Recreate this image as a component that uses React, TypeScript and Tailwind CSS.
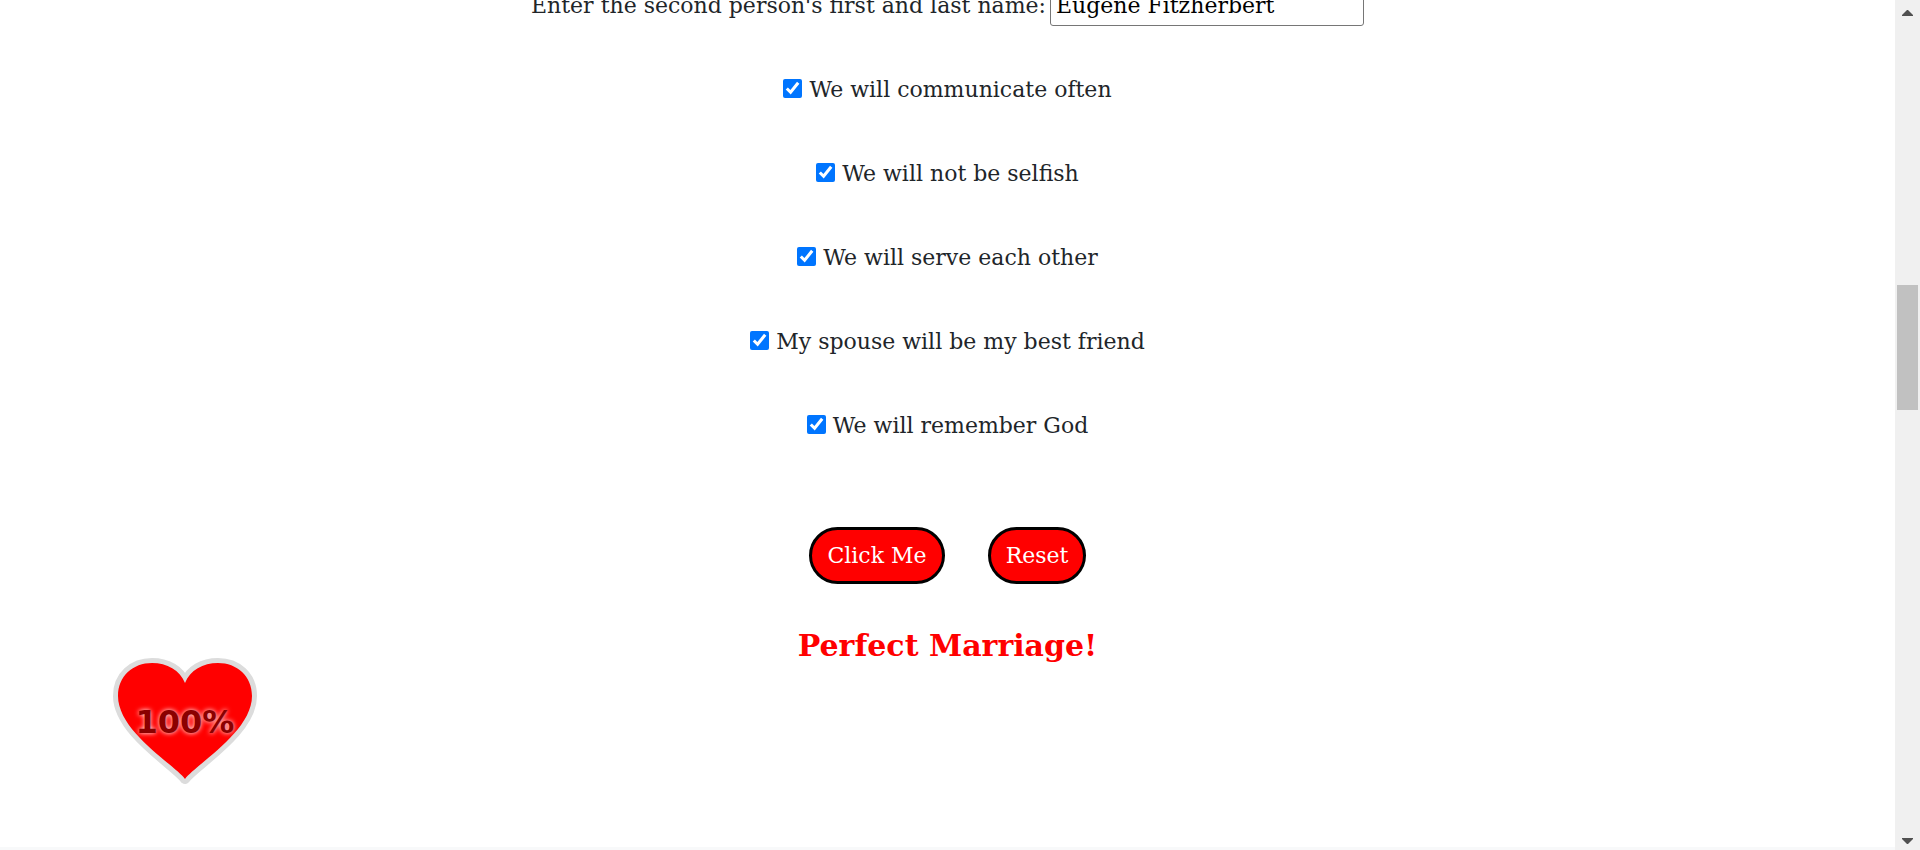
import { useState } from 'react';

const PROMISES = [
  'We will communicate often',
  'We will not be selfish',
  'We will serve each other',
  'My spouse will be my best friend',
  'We will remember God',
];

function Heart({ percent }: { percent: number }) {
  return (
    <div className="grid w-36 place-items-center">
      <svg viewBox="0 0 144 127" className="col-start-1 row-start-1 w-full" aria-hidden="true">
        <path
          d="M72 121 C62 107 5 74 5 38 C5 18 20 5 39 5 C54 5 67 12 72 25 C77 12 90 5 105 5 C124 5 139 18 139 38 C139 74 82 107 72 121 Z"
          fill="#ff0000"
          stroke="#dcdcdc"
          strokeWidth="10"
          strokeLinejoin="round"
          paintOrder="stroke"
        />
      </svg>
      <span className="col-start-1 row-start-1 font-['DejaVu_Sans',sans-serif] text-[32px] font-bold leading-none text-[#8b0000] [text-shadow:0_0_5px_#ffffff]">
        {percent}%
      </span>
    </div>
  );
}

function ScrollTrack() {
  return (
    <div className="flex w-[25px] shrink-0 flex-col items-center bg-[#f0f0f0] pt-[5px] pb-[6px]" aria-hidden="true">
      <svg viewBox="0 0 11 6" className="my-[5px] w-[11px]" fill="#505050">
        <path d="M5 0h1l5 5v1H0V5z" />
      </svg>
      <div className="grow-[264]" />
      <div className="h-[125px] w-[21px] bg-[#c1c1c1]" />
      <div className="grow-[423]" />
      <svg viewBox="0 0 11 6" className="mt-[5px] w-[11px]" fill="#505050">
        <path d="M0 0h11v1L6 6H5L0 1z" />
      </svg>
    </div>
  );
}

export default function App() {
  const [name, setName] = useState('Eugene Fitzherbert');
  const [checked, setChecked] = useState(PROMISES.map(() => true));
  const [submitted, setSubmitted] = useState(true);

  const toggle = (i: number) => setChecked(c => c.map((v, n) => (n === i ? !v : v)));
  const percent = (checked.filter(Boolean).length / PROMISES.length) * 100;

  const reset = () => {
    setName('');
    setChecked(PROMISES.map(() => false));
    setSubmitted(false);
  };

  return (
    <div className="flex min-h-screen overflow-hidden bg-white font-['Roboto_Slab','DejaVu_Serif',serif] text-[22px] text-[#212529]">
      <main className="flex min-w-0 grow flex-col">
        <div className="-mt-4 mb-5 flex h-[42px] items-center justify-center gap-1">
          <label htmlFor="second-name">Enter the second person's first and last name:</label>
          <input
            id="second-name"
            type="text"
            value={name}
            onChange={e => setName(e.target.value)}
            className="h-[42px] w-[314px] rounded-[3px] border border-[#767676] bg-white px-[5px] text-black"
          />
        </div>

        {PROMISES.map((text, i) => (
          <label key={text} className="flex h-[84px] items-center justify-center gap-[7px]">
            <input type="checkbox" checked={checked[i]} onChange={() => toggle(i)} className="size-[19px]" />
            <span className="pt-0.5">{text}</span>
          </label>
        ))}

        <div className="mt-[61px] flex justify-center gap-[43px]">
          <button
            onClick={() => setSubmitted(true)}
            className="h-[57px] w-[136px] rounded-full border-3 border-black bg-[#ff0000] text-white"
          >
            Click Me
          </button>
          <button
            onClick={reset}
            className="h-[57px] w-[98px] rounded-full border-3 border-black bg-[#ff0000] text-white"
          >
            Reset
          </button>
        </div>

        <div className="mt-[38px] grid grow grid-cols-[1fr_auto_1fr]">
          <div className="pt-[36px] pl-[113px]">{submitted && <Heart percent={percent} />}</div>
          <h2 className="text-[30px] font-bold leading-[48px] text-[#ff0000]">
            {submitted && percent === 100 && 'Perfect Marriage!'}
          </h2>
        </div>
        <div className="h-[3px] bg-[#f8f9fa]" />
      </main>
      <ScrollTrack />
    </div>
  );
}
